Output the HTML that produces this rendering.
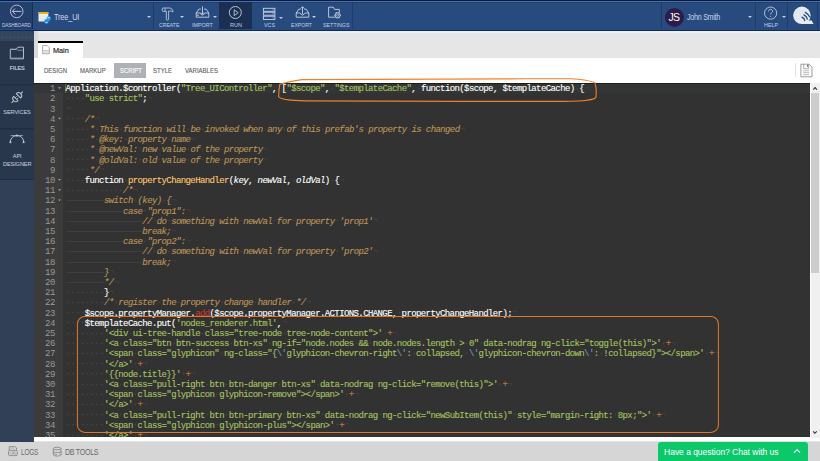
<!DOCTYPE html>
<html><head><meta charset="utf-8">
<style>
*{margin:0;padding:0;box-sizing:border-box}
html,body{width:820px;height:461px;overflow:hidden;background:#fff;font-family:"Liberation Sans",sans-serif}
.abs{position:absolute}
svg{position:absolute;overflow:visible}
#hdr{left:0;top:0;width:820px;height:31px;background:#274b7f}
.ln{position:absolute}
.sep{position:absolute;top:2px;width:1px;height:27px;background:#1f3b66}
.lbl{position:absolute;color:#c3d0e4;font-size:5.9px;line-height:6px;white-space:nowrap;letter-spacing:-0.32px}
.caret{position:absolute;width:0;height:0;border-left:2.4px solid transparent;border-right:2.4px solid transparent;border-top:2.2px solid #c3d0e4}
#side{left:0;top:31px;width:33.7px;height:410.8px;background:#313f57}
.slbl{position:absolute;color:#c8d2e0;font-size:5.6px;line-height:6px;white-space:nowrap;text-align:center;width:34px;left:0;letter-spacing:-0.1px}
#tabs{left:33.7px;top:31px;width:786.3px;height:26.7px;background:#e6e6e6}
#sub{left:33.7px;top:57.7px;width:786.3px;height:25.5px;background:#fff}
.st2{top:9.7px;font-size:6.9px;line-height:8px;color:#5c5c5c;white-space:nowrap;-webkit-text-stroke:0.12px;transform:scaleX(0.87);transform-origin:0 0}
#ed{left:33.7px;top:83.2px;width:776px;height:354.3px;background:#323232;overflow:hidden}
#gut{left:0;top:0;width:29.7px;height:354px;background:#3b3b3b}
#code{left:31.8px;top:1px;font-family:"Liberation Mono",monospace;font-size:9px;letter-spacing:-0.6px;line-height:10.2px;color:#fff;white-space:pre;-webkit-text-stroke:0.12px}
#nums{left:0;top:1px;width:21px;font-family:"Liberation Mono",monospace;font-size:9px;letter-spacing:-0.6px;line-height:10.2px;color:#999;text-align:right;white-space:pre}
#bot{left:0;top:441.8px;width:820px;height:19.2px;background:#d6d6d6}
#chat{left:658.3px;top:442px;width:149.8px;height:19px;background:#0bc86b;border-radius:3px 3px 0 0}
.s{color:#a5c261}.c{color:#bc9458;font-style:italic}.o{color:#cc7833}.f{color:#ffc66d}.p{font-style:italic}.r{color:#c63a2a}.e{color:#6c99bb}.i{color:#4a4a4a;position:relative;top:-0.5px}.t{color:#444;top:0}.n{color:#404040}
</style></head><body>
<!-- HEADER -->
<div id="hdr" class="abs">
 <div class="ln" style="left:0;top:0;width:820px;height:1px;background:#111a2a"></div>
 <div class="ln" style="left:0;top:1px;width:820px;height:1px;background:#3f6fbf"></div>
 <div class="ln" style="left:0;top:2px;width:820px;height:1px;background:#223f6b"></div>
 <div class="ln" style="left:0;top:30px;width:820px;height:1px;background:#0b2b60"></div>
 <div class="ln" style="left:0;top:2px;width:32px;height:27px;background:#243f6b"></div>
 <div class="sep" style="left:32px;background:#1a2d4d"></div>
 <div class="sep" style="left:152.5px"></div>
 <div class="ln" style="left:219px;top:2px;width:32.7px;height:27px;background:#1b2f52"></div>
 <div class="sep" style="left:351.5px"></div>
 <div class="sep" style="left:660.5px"></div>
 <div class="sep" style="left:754.5px"></div>
 <div class="sep" style="left:787px"></div>
 <div class="sep" style="left:817px"></div>
 <!-- dashboard -->
<svg style="left:0;top:0" width="33" height="30" viewBox="0 0 33 30"><circle cx="16.7" cy="11.4" r="6.3" fill="none" stroke="#c9d3e3" stroke-width="0.85"/><path d="M12.4 11.4H21.4M15 8.6L12.4 11.4L15.2 14.4" fill="none" stroke="#c9d3e3" stroke-width="0.9"/></svg>
<div class="lbl" style="left:2.1px;top:22.3px;font-size:5.3px;letter-spacing:-0.1px;transform:scaleX(0.88);transform-origin:0 0">DASHBOARD</div>
<!-- project icon -->
<svg style="left:0;top:0" width="60" height="30" viewBox="0 0 60 30"><rect x="38.5" y="12" width="9.8" height="9.5" fill="#f4f2ee"/><rect x="38.5" y="12" width="9.8" height="2" fill="#e6b412"/><path d="M39.5 16H47M39.5 18H46M39.5 20H45" stroke="#c8c8c8" stroke-width="0.5"/><rect x="46.7" y="16.6" width="3.9" height="3.9" rx="0.8" fill="#2b9ff0"/><rect x="44.5" y="19.3" width="4" height="4.3" rx="0.8" fill="#1f8fe6"/><path d="M45.3 22.6H47.6M47.6 17.6H49.8" stroke="#bdf6ff" stroke-width="0.9"/></svg>
<div class="lbl" style="left:53.6px;top:12.5px;font-size:8.3px;line-height:9px;color:#d2dcec;letter-spacing:-0.1px;transform:scaleX(0.87);transform-origin:0 0">Tree_UI</div>
<div class="caret" style="left:146.8px;top:16.2px"></div>
<!-- create -->
<svg style="left:0;top:0" width="360" height="30" viewBox="0 0 360 30"><path d="M166.3 11.4H163.1C162.6 11.4 162.3 11.1 162.3 10.6V8.8C162.3 8.3 162.6 8 163.1 8H169.6C171.6 8.2 172.8 9.6 173.1 11.9C172.1 11.2 170.9 10.9 169.5 11H168.6V19.3C168.6 19.8 168.2 20.1 167.45 20.1C166.7 20.1 166.3 19.8 166.3 19.3Z M165.1 8.2V11.2" fill="none" stroke="#c9d3e3" stroke-width="0.8"/>
<!-- import -->
<path d="M200.9 9.1H198.9L196.2 13V17.2H208.8V13L206.1 9.1H204.1M196.2 13H199.6L202.5 15.2L205.4 13H208.8M196.6 15.2H199" fill="none" stroke="#c9d3e3" stroke-width="0.9"/><path d="M202.5 6.4V14.2M200.9 12.5L202.5 14.2L204.1 12.5" fill="none" stroke="#c9d3e3" stroke-width="0.9"/>
<!-- run -->
<circle cx="235.3" cy="12.5" r="6" fill="none" stroke="#c9d3e3" stroke-width="0.9"/><path d="M234.2 9.8V15.6L238.2 12.7Z" fill="none" stroke="#c9d3e3" stroke-width="0.85" stroke-linejoin="round"/>
<!-- vcs -->
<rect x="263.4" y="8.3" width="11.5" height="3" fill="none" stroke="#c9d3e3" stroke-width="0.9"/><rect x="263.4" y="12.2" width="11.5" height="3" fill="none" stroke="#c9d3e3" stroke-width="0.9"/><rect x="263.4" y="16.2" width="11.5" height="3.3" fill="none" stroke="#c9d3e3" stroke-width="0.9"/><path d="M272.6 9.8h1M272.6 13.7h1M272.6 17.8h1" stroke="#c9d3e3" stroke-width="0.8"/>
<!-- export -->
<path d="M300.9 9.1H298.9L296.2 13V17.2H308.8V13L306.1 9.1H304.1M296.2 13H299.6L302.5 15.2L305.4 13H308.8" fill="none" stroke="#c9d3e3" stroke-width="0.9"/><path d="M302.5 14.2V6.8M300.9 8.4L302.5 6.7L304.1 8.4" fill="none" stroke="#c9d3e3" stroke-width="0.9"/>
<!-- settings -->
<path d="M335 17.2H328.6V7.2H333.3L334.6 9.4H339.3V12.5" fill="none" stroke="#c9d3e3" stroke-width="0.9"/><circle cx="337.6" cy="15.3" r="2.5" fill="#274b7f" stroke="#c9d3e3" stroke-width="0.9"/><path d="M339.90 15.30L341.00 15.30M338.75 17.29L339.30 18.24M336.45 17.29L335.90 18.24M335.30 15.30L334.20 15.30M336.45 13.31L335.90 12.36M338.75 13.31L339.30 12.36" stroke="#c9d3e3" stroke-width="1.1"/><circle cx="337.6" cy="15.3" r="1" fill="none" stroke="#c9d3e3" stroke-width="0.7"/>
</svg>
<div class="lbl" style="left:158.6px;top:22px;letter-spacing:0;transform:scaleX(0.87);transform-origin:0 0">CREATE</div>
<div class="caret" style="left:179.6px;top:16.2px"></div>
<div class="lbl" style="left:191.8px;top:22px;letter-spacing:0;transform:scaleX(0.91);transform-origin:0 0">IMPORT</div>
<div class="caret" style="left:212.6px;top:16.2px"></div>
<div class="lbl" style="left:229.6px;top:22px;letter-spacing:0;transform:scaleX(0.93);transform-origin:0 0">RUN</div>
<div class="lbl" style="left:263.8px;top:22px;letter-spacing:0;transform:scaleX(0.91);transform-origin:0 0">VCS</div>
<div class="caret" style="left:279.4px;top:16.5px"></div>
<div class="lbl" style="left:291.4px;top:22px;letter-spacing:0;transform:scaleX(0.87);transform-origin:0 0">EXPORT</div>
<div class="caret" style="left:312.2px;top:16.2px"></div>
<div class="lbl" style="left:323px;top:22px;letter-spacing:0;transform:scaleX(0.9);transform-origin:0 0">SETTINGS</div>
<!-- user -->
<svg style="left:0;top:0" width="820" height="30" viewBox="0 0 820 30"><circle cx="674.5" cy="17.4" r="9.5" fill="#2d1c48"/>
<circle cx="770.6" cy="13.1" r="6.1" fill="none" stroke="#c9d3e3" stroke-width="0.85"/>
<path d="M768.6 11.4C768.6 10 769.5 9.3 770.6 9.3C771.7 9.3 772.6 10 772.6 11.2C772.6 12.6 770.7 12.8 770.7 14.6" fill="none" stroke="#c9d3e3" stroke-width="0.85"/><circle cx="770.7" cy="16.3" r="0.55" fill="#c9d3e3"/>
<!-- logo -->
<circle cx="801.9" cy="15.3" r="8.7" fill="#e6edf5"/><path d="M801.9 20.6H811.6L813.6 24H801.9Z" fill="#e6edf5"/><path d="M795 11H806M794.2 13.4H803.5M793.6 16H801.5M793.8 18.6H800" stroke="#c4cedc" stroke-width="0.4"/><path d="M805.29 12.37A10.00 10.00 0 0 1 809.59 16.82" fill="none" stroke="#274b7f" stroke-width="1.3" stroke-linecap="round"/><path d="M803.93 14.93A7.10 7.10 0 0 1 807.35 19.01" fill="none" stroke="#274b7f" stroke-width="1.3" stroke-linecap="round"/><path d="M802.04 17.25A4.20 4.20 0 0 1 804.74 20.47" fill="none" stroke="#274b7f" stroke-width="1.4" stroke-linecap="round"/>
</svg>
<div class="lbl" style="left:668.4px;top:12.2px;font-size:10.5px;line-height:11px;color:#fff;letter-spacing:-0.6px">JS</div>
<div class="lbl" style="left:686.8px;top:12.6px;font-size:8.2px;line-height:9px;color:#c5d3e8;transform:scaleX(0.875);transform-origin:0 0">John Smith</div>
<div class="caret" style="left:748.4px;top:16px"></div>
<div class="lbl" style="left:764.4px;top:22px;letter-spacing:0;transform:scaleX(0.92);transform-origin:0 0">HELP</div>
<div class="caret" style="left:781.6px;top:16px"></div>

</div>
<!-- SIDEBAR -->
<div id="side" class="abs">
 <div class="ln" style="left:0;top:0;width:33.7px;height:148.4px;background:#28374c"></div><div class="ln" style="left:0;top:0;width:33.7px;height:9.9px;background:#34465e"></div><div class="ln" style="left:0;top:148px;width:33.7px;height:1px;background:#222f40"></div>
<svg style="left:0;top:-1px" width="34" height="412" viewBox="0 30 34 412">
<path d="M2.2 37.4H32" stroke="#6b798b" stroke-width="0.8" stroke-dasharray="0.8 3.2"/>
<path d="M10.3 58.8V49.3H16.2L18 47.2H23.5V58.8Z" fill="none" stroke="#c2ccd8" stroke-width="0.9"/><path d="M10.3 49.3H16.2L18 50.3H23.5M10.3 58H23.5" fill="none" stroke="#9aa6b5" stroke-width="0.7"/>
<path d="M0 84.7H34" stroke="#202c3c" stroke-width="1"/>
<g transform="translate(17.2 97.2) rotate(-45)" fill="none" stroke="#c2ccd8" stroke-width="0.95"><path d="M-1.9 -3.1A3.1 3.1 0 0 0 -1.9 3.1Z"/><path d="M-5 0H-8"/><path d="M1.9 -3.1A3.1 3.1 0 0 1 1.9 3.1Z"/><path d="M5 0H8"/><path d="M-1.9 -1.1H0.2M-1.9 1.1H0.2" stroke-width="0.8"/></g>
<path d="M0 128.7H34" stroke="#202c3c" stroke-width="1"/>
<path d="M10.4 142C10.6 137.8 13.5 135.7 17 135.7C20.5 135.7 23.4 137.8 23.6 142" fill="none" stroke="#c2ccd8" stroke-width="1"/><path d="M10.7 135.6H23" stroke="#c2ccd8" stroke-width="0.7"/><circle cx="16.9" cy="135.4" r="1" fill="#c2ccd8"/><path d="M9.6 142.8L10.4 140.4L11.2 142.8Z M22.8 142.8L23.6 140.4L24.4 142.8Z" fill="#c2ccd8" stroke="#c2ccd8" stroke-width="0.5"/>
<path d="M0 170.8H34" stroke="#26374e" stroke-width="0.6"/>
</svg>
<div class="slbl" style="top:34.2px;left:0.2px;font-size:5.6px;-webkit-text-stroke:0.15px">FILES</div>
<div class="slbl" style="top:78.2px">SERVICES</div>
<div class="slbl" style="top:122.2px;left:0.2px">API</div>
<div class="slbl" style="top:129.5px;left:0.2px">DESIGNER</div>

</div>
<!-- TABS -->
<div id="tabs" class="abs">
 <div class="ln" style="left:0;top:0;width:786.3px;height:2.2px;background:#eeeeec"></div>
 <div class="ln" style="left:4.4px;top:9.7px;width:45px;height:17px;background:#fff"></div>
 <div class="ln" style="left:4.4px;top:9.7px;width:45px;height:2px;background:#000"></div>
 <svg style="left:0;top:0" width="60" height="30" viewBox="33.7 31 60 30"><path d="M42.3 45.6H47L49 47.6V53.7H42.3Z" fill="#fff" stroke="#8a8a8a" stroke-width="0.7"/><path d="M42.6 50.5H48.7M42.6 52H48.7" stroke="#bbb" stroke-width="0.8"/></svg>
<div class="abs" style="left:19.2px;top:14.8px;font-size:8px;line-height:9px;color:#151515;white-space:nowrap;-webkit-text-stroke:0.15px;transform:scaleX(0.91);transform-origin:0 0">Main</div>
<div class="ln" style="left:0;top:0;width:4.3px;height:26.7px;background:#dadada"></div>

</div>
<div id="sub" class="abs">
 <div class="ln" style="left:80.6px;top:5px;width:32px;height:15px;background:#aeb2b7"></div>
<div class="ln" style="left:761.6px;top:5.5px;width:0.8px;height:13.8px;background:#e2e2e2"></div>
<svg style="left:0;top:0" width="800" height="26" viewBox="33.7 57.7 800 26"><path d="M800.6 63.9H808.8L811.7 66.9V76.5H800.6Z" fill="none" stroke="#7e7e7e" stroke-width="0.75"/><path d="M803.4 64V68.4H808.3V64" fill="none" stroke="#8a8a8a" stroke-width="0.7"/><path d="M807.3 64.4V66.6" stroke="#555" stroke-width="0.9"/><path d="M802.9 70.5H808.8M802.9 72.4H808.8M802.9 74.4H808.8" stroke="#8a8a8a" stroke-width="0.6"/></svg>
<div class="abs st2" style="left:10.3px">DESIGN</div>
<div class="abs st2" style="left:46.3px">MARKUP</div>
<div class="abs st2" style="left:86.1px;color:#fff">SCRIPT</div>
<div class="abs st2" style="left:119.4px">STYLE</div>
<div class="abs st2" style="left:151.1px">VARIABLES</div>

</div>
<div id="ed" class="abs">
 <div id="gut" class="abs"></div>
 <div class="ln" style="left:0;top:0;width:29.7px;height:10.2px;background:#353637"></div>
 <div class="ln" style="left:29.7px;top:0;width:747px;height:10.2px;background:#343535"></div>
 <div class="ln" style="left:31.8px;top:1px;width:0.9px;height:9px;background:#5b7236"></div>
 <div class="ln" style="left:0;top:0;width:776px;height:1px;background:#1c1c1c"></div>
 <svg style="left:0;top:0" width="30" height="200" viewBox="0 0 30 200"><path d="M24.1 4.2H26.9L25.5 5.9Z" fill="#aaa"/><path d="M24.1 34.8H26.9L25.5 36.5Z" fill="#aaa"/><path d="M24.1 96.0H26.9L25.5 97.7Z" fill="#aaa"/><path d="M24.1 106.2H26.9L25.5 107.9Z" fill="#aaa"/><path d="M24.1 116.4H26.9L25.5 118.1Z" fill="#aaa"/></svg>
 <div id="nums" class="abs">1
2
3
4
5
6
7
8
9
10
11
12
13
14
15
16
17
18
19
20
21
22
23
24
25
26
27
28
29
30
31
32
33
34
35</div>
 <div id="code" class="abs">Application.$controller(<span class="s">&quot;Tree_UIController&quot;</span>,<span class="i">·</span>[<span class="s">&quot;$scope&quot;</span>,<span class="i">·</span><span class="s">&quot;$templateCache&quot;</span>,<span class="i">·</span>function($scope,<span class="i">·</span>$templateCache)<span class="i">·</span>{<span class="i n">¬</span>
<span class="i">····</span><span class="s">&quot;use<span class="i">·</span>strict&quot;</span>;<span class="i n">¬</span>
<span class="i n">¬</span>
<span class="i">····</span><span class="c">/*</span><span class="i n">¬</span>
<span class="i">·····</span><span class="c">*<span class="i">·</span>This<span class="i">·</span>function<span class="i">·</span>will<span class="i">·</span>be<span class="i">·</span>invoked<span class="i">·</span>when<span class="i">·</span>any<span class="i">·</span>of<span class="i">·</span>this<span class="i">·</span>prefab&#x27;s<span class="i">·</span>property<span class="i">·</span>is<span class="i">·</span>changed</span><span class="i n">¬</span>
<span class="i">·····</span><span class="c">*<span class="i">·</span>@key:<span class="i">·</span>property<span class="i">·</span>name</span><span class="i n">¬</span>
<span class="i">·····</span><span class="c">*<span class="i">·</span>@newVal:<span class="i">·</span>new<span class="i">·</span>value<span class="i">·</span>of<span class="i">·</span>the<span class="i">·</span>property</span><span class="i n">¬</span>
<span class="i">·····</span><span class="c">*<span class="i">·</span>@oldVal:<span class="i">·</span>old<span class="i">·</span>value<span class="i">·</span>of<span class="i">·</span>the<span class="i">·</span>property</span><span class="i n">¬</span>
<span class="i">·····</span><span class="c">*/</span><span class="i n">¬</span>
<span class="i">····</span>function<span class="i">·</span><span class="f">propertyChangeHandler</span>(<span class="p">key</span>,<span class="i">·</span><span class="p">newVal</span>,<span class="i">·</span><span class="p">oldVal</span>)<span class="i">·</span>{<span class="i n">¬</span>
<span class="i">············</span><span class="c">/*</span><span class="i n">¬</span>
<span class="i t">————————</span><span class="c">switch<span class="i">·</span>(key)<span class="i">·</span>{</span><span class="i n">¬</span>
<span class="i t">————————————</span><span class="c">case<span class="i">·</span>&quot;prop1&quot;:</span><span class="i n">¬</span>
<span class="i t">————————————————</span><span class="c">//<span class="i">·</span>do<span class="i">·</span>something<span class="i">·</span>with<span class="i">·</span>newVal<span class="i">·</span>for<span class="i">·</span>property<span class="i">·</span>&#x27;prop1&#x27;</span><span class="i n">¬</span>
<span class="i t">————————————————</span><span class="c">break;</span><span class="i n">¬</span>
<span class="i t">————————————</span><span class="c">case<span class="i">·</span>&quot;prop2&quot;:</span><span class="i n">¬</span>
<span class="i t">————————————————</span><span class="c">//<span class="i">·</span>do<span class="i">·</span>something<span class="i">·</span>with<span class="i">·</span>newVal<span class="i">·</span>for<span class="i">·</span>property<span class="i">·</span>&#x27;prop2&#x27;</span><span class="i n">¬</span>
<span class="i t">————————————————</span><span class="c">break;</span><span class="i n">¬</span>
<span class="i t">————————</span><span class="c">}</span><span class="i n">¬</span>
<span class="i t">————————</span><span class="c">*/</span><span class="i n">¬</span>
<span class="i">········</span>}<span class="i n">¬</span>
<span class="i">········</span><span class="c">/*<span class="i">·</span>register<span class="i">·</span>the<span class="i">·</span>property<span class="i">·</span>change<span class="i">·</span>handler<span class="i">·</span>*/</span><span class="i n">¬</span>
<span class="i">····</span>$scope.propertyManager.<span class="r">add</span>($scope.propertyManager.ACTIONS.CHANGE,<span class="i">·</span>propertyChangeHandler);<span class="i n">¬</span>
<span class="i">····</span>$templateCache.put(<span class="s">&#x27;nodes_renderer.html&#x27;</span>,<span class="i n">¬</span>
<span class="i">········</span><span class="s">&#x27;&lt;div<span class="i">·</span>ui-tree-handle<span class="i">·</span>class=&quot;tree-node<span class="i">·</span>tree-node-content&quot;&gt;&#x27;</span><span class="i">·</span><span class="o">+</span><span class="i n">¬</span>
<span class="i">········</span><span class="s">&#x27;&lt;a<span class="i">·</span>class=&quot;btn<span class="i">·</span>btn-success<span class="i">·</span>btn-xs&quot;<span class="i">·</span>ng-if=&quot;node.nodes<span class="i">·</span>&amp;&amp;<span class="i">·</span>node.nodes.length<span class="i">·</span>&gt;<span class="i">·</span>0&quot;<span class="i">·</span>data-nodrag<span class="i">·</span>ng-click=&quot;toggle(this)&quot;&gt;&#x27;</span><span class="i">·</span><span class="o">+</span><span class="i n">¬</span>
<span class="i">········</span><span class="s">&#x27;&lt;span<span class="i">·</span>class=&quot;glyphicon&quot;<span class="i">·</span>ng-class=&quot;{</span><span class="e">\&#x27;</span><span class="s">glyphicon-chevron-right</span><span class="e">\&#x27;</span><span class="s">:<span class="i">·</span>collapsed,<span class="i">·</span></span><span class="e">\&#x27;</span><span class="s">glyphicon-chevron-down</span><span class="e">\&#x27;</span><span class="s">:<span class="i">·</span>!collapsed}&quot;&gt;&lt;/span&gt;&#x27;</span><span class="i">·</span><span class="o">+</span><span class="i n">¬</span>
<span class="i">········</span><span class="s">&#x27;&lt;/a&gt;&#x27;</span><span class="i">·</span><span class="o">+</span><span class="i n">¬</span>
<span class="i">········</span><span class="s">&#x27;{{node.title}}&#x27;</span><span class="i">·</span><span class="o">+</span><span class="i n">¬</span>
<span class="i">········</span><span class="s">&#x27;&lt;a<span class="i">·</span>class=&quot;pull-right<span class="i">·</span>btn<span class="i">·</span>btn-danger<span class="i">·</span>btn-xs&quot;<span class="i">·</span>data-nodrag<span class="i">·</span>ng-click=&quot;remove(this)&quot;&gt;&#x27;</span><span class="i">·</span><span class="o">+</span><span class="i n">¬</span>
<span class="i">········</span><span class="s">&#x27;&lt;span<span class="i">·</span>class=&quot;glyphicon<span class="i">·</span>glyphicon-remove&quot;&gt;&lt;/span&gt;&#x27;</span><span class="i">·</span><span class="o">+</span><span class="i n">¬</span>
<span class="i">········</span><span class="s">&#x27;&lt;/a&gt;&#x27;</span><span class="i">·</span><span class="o">+</span><span class="i n">¬</span>
<span class="i">········</span><span class="s">&#x27;&lt;a<span class="i">·</span>class=&quot;pull-right<span class="i">·</span>btn<span class="i">·</span>btn-primary<span class="i">·</span>btn-xs&quot;<span class="i">·</span>data-nodrag<span class="i">·</span>ng-click=&quot;newSubItem(this)&quot;<span class="i">·</span>style=&quot;margin-right:<span class="i">·</span>8px;&quot;&gt;&#x27;</span><span class="i">·</span><span class="o">+</span><span class="i n">¬</span>
<span class="i">········</span><span class="s">&#x27;&lt;span<span class="i">·</span>class=&quot;glyphicon<span class="i">·</span>glyphicon-plus&quot;&gt;&lt;/span&gt;&#x27;</span><span class="i">·</span><span class="o">+</span><span class="i n">¬</span>
<span class="i">········</span><span class="s">&#x27;&lt;/a&gt;&#x27;</span><span class="i">·</span><span class="o">+</span><span class="i n">¬</span></div>
</div>
<div class="abs" style="left:809.7px;top:83.2px;width:10.3px;height:355px;background:#fff"></div>
<div class="abs" style="left:811px;top:83.2px;width:9px;height:354.8px;background:#f0f0f0"></div>
<div class="abs" style="left:811px;top:93px;width:8px;height:179.5px;background:#cdcdcd"></div>
<svg style="left:0;top:0" width="820" height="461" viewBox="0 0 820 461"><path d="M813.3 89.6L815.1 87.6L816.9 89.6" fill="none" stroke="#333" stroke-width="1.1"/><path d="M813.1 431.3L814.9 433.3L816.7 431.3" fill="none" stroke="#333" stroke-width="1.1"/></svg>
<div class="abs" style="left:33.7px;top:440.6px;width:786.3px;height:1.2px;background:#e2e2e2"></div>
<div id="bot" class="abs">
 <svg style="left:0;top:0" width="120" height="20" viewBox="0 441.8 120 20"><path d="M9.3 450.1V446.4H15.1L16.5 447.8V450.1" fill="none" stroke="#7f7f7f" stroke-width="0.8"/><rect x="10.3" y="447.1" width="3.9" height="1.5" fill="#bdbdbd"/><rect x="8.5" y="450.1" width="8.8" height="5.3" rx="1.3" fill="none" stroke="#7f7f7f" stroke-width="0.8"/><path d="M10.4 451.5V453.9H11.6M12.4 451.5H13.5V453.9H12.4ZM15.6 451.5H14.4V453.9H15.6V452.8" stroke="#8c8c8c" stroke-width="0.45" fill="none"/>
<ellipse cx="57.1" cy="448.3" rx="3.8" ry="1.3" fill="none" stroke="#7f7f7f" stroke-width="0.8"/><path d="M53.3 448.3V454.4C53.3 455.2 55 455.8 57.1 455.8C59.2 455.8 60.9 455.2 60.9 454.4V448.3M53.3 450.9C53.3 451.7 55 452.3 57.1 452.3C59.2 452.3 60.9 451.7 60.9 450.9M53.3 453C53.3 453.8 55 454.3 57.1 454.3" fill="none" stroke="#7f7f7f" stroke-width="0.8"/><circle cx="60.7" cy="453.3" r="1.1" fill="#d6d6d6" stroke="#7f7f7f" stroke-width="0.6"/></svg>
<div class="abs" style="left:20.8px;top:6.2px;font-size:8.2px;line-height:9px;color:#6a6a6a;letter-spacing:-0.3px;white-space:nowrap;transform:scaleX(0.8);transform-origin:0 0">LOGS</div>
<div class="abs" style="left:64.8px;top:6.2px;font-size:8.2px;line-height:9px;color:#6a6a6a;letter-spacing:-0.3px;white-space:nowrap;transform:scaleX(0.86);transform-origin:0 0">DB TOOLS</div>

</div>
<div id="chat" class="abs">
 <div class="abs" style="left:5.8px;top:5px;font-size:8.5px;line-height:10px;color:#fff;letter-spacing:-0.03px;white-space:nowrap">Have a question? Chat with us</div>
<svg style="left:0;top:0" width="150" height="19" viewBox="658.3 442 150 19"><path d="M794.3 452.6L797.3 449.8L800.3 452.6" fill="none" stroke="#fff" stroke-width="1.2"/></svg>

</div>
<svg style="left:0;top:0" width="820" height="461" viewBox="0 0 820 461">
<path d="M279.8 84.2C285 82.6 294 80.6 301.7 79.6C360 79 470 78.7 571 78.8C580 79.2 588 80.2 594.8 82.6C596.2 86 596.4 92 596 97C594.5 100.2 586 101.2 564 101.4C480 101.5 380 101.2 306 100.9C297 100.7 291 100.4 288.5 99.9C282 99 279 98.3 278.6 96.6C278.8 92 279.2 87.5 279.8 84.2Z" fill="none" stroke="#f0812a" stroke-width="1.1"/>
<rect x="77.4" y="316.4" width="641" height="116" rx="7.5" ry="7.5" fill="none" stroke="#dc782c" stroke-width="1.05"/>
</svg>

</body></html>
